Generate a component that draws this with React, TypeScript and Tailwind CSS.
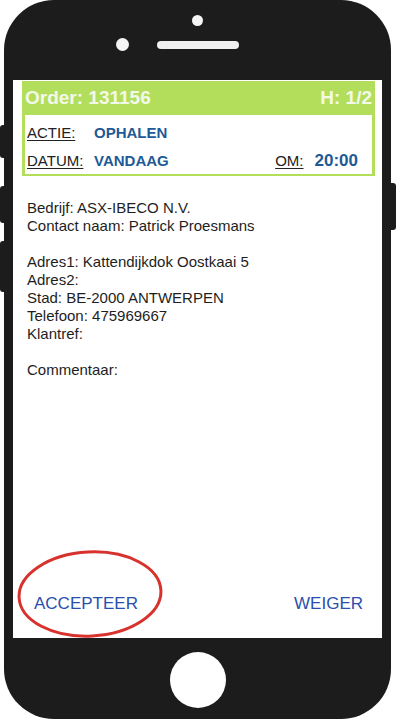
import React from 'react';

const font = { fontFamily: '"Liberation Sans", Arial, sans-serif' };

const details = [
  'Bedrijf: ASX-IBECO N.V.',
  'Contact naam: Patrick Proesmans',
  '',
  'Adres1: Kattendijkdok Oostkaai 5',
  'Adres2:',
  'Stad: BE-2000 ANTWERPEN',
  'Telefoon: 475969667',
  'Klantref:',
  '',
  'Commentaar:',
];

const App = () => {
  return (
    <div className="w-[397px] h-[720px] bg-white overflow-hidden" style={font}>
      {/* PHONE BODY */}
      <div className="relative ml-[4px] w-[387px] h-[719px] rounded-[50px] bg-[#1c1c1c] flex flex-col items-center">
        {/* side buttons */}
        <div className="absolute left-[-4px] top-[125px] w-[6px] h-[33px] rounded-l-[3px] bg-[#1c1c1c]" />
        <div className="absolute left-[-4px] top-[186px] w-[6px] h-[37px] rounded-l-[3px] bg-[#1c1c1c]" />
        <div className="absolute left-[-4px] top-[241px] w-[6px] h-[51px] rounded-l-[3px] bg-[#1c1c1c]" />
        <div className="absolute right-[-5px] top-[183px] w-[7px] h-[47px] rounded-r-[3px] bg-[#1c1c1c]" />

        {/* TOP BEZEL */}
        <div className="w-full h-[80px] flex flex-col items-center">
          <div className="mt-[15px] w-[11px] h-[11px] rounded-full bg-[#f4f4f4]" />
          <div className="self-start ml-[112px] mt-[12px] flex items-center">
            <div className="w-[13px] h-[13px] rounded-full bg-[#f4f4f4]" />
            <div className="ml-[28px] w-[82px] h-[8px] rounded-full bg-[#f0f0f0]" />
          </div>
        </div>

        {/* SCREEN */}
        <div className="relative w-[369px] h-[558px] bg-white flex flex-col">
          <div className="pl-[9px] pr-[7px] pt-[1px]">
            <div className="bg-[#b3de5c] px-[3px] pb-[2px]">
              <div className="h-[34px] flex items-center justify-between pr-[0px] pl-[0px] text-[19px] font-bold text-[#f3f9e8]">
                <span>Order: 131156</span>
                <span>H: 1/2</span>
              </div>
              <div className="bg-white pt-[6px] pb-[1px] pl-[2px] flex flex-col gap-[4px] text-[15px]">
                <div className="h-[24px] flex items-center">
                  <span className="w-[67px] text-[#222] underline underline-offset-2">ACTIE:</span>
                  <span className="font-bold text-[#1e5a96]">OPHALEN</span>
                </div>
                <div className="h-[24px] flex items-center">
                  <span className="w-[67px] text-[#222] underline underline-offset-2">DATUM:</span>
                  <span className="flex-1 font-bold text-[#1e5a96]">VANDAAG</span>
                  <span className="text-[#222] underline underline-offset-2">OM:</span>
                  <span className="ml-[11px] mr-[14px] text-[17px] font-bold text-[#1e5a96]">20:00</span>
                </div>
              </div>
            </div>
          </div>

          <div className="mt-[23px] px-[14px] text-[15px] leading-[18px] text-[#1e1e1e]">
            {details.map((line, i) => (
              <div key={i} className="h-[18px]">{line}</div>
            ))}
          </div>

          {/* ACTIONS */}
          <div className="mt-auto mb-[12px] h-[44px] pl-[21px] pr-[19px] flex items-center justify-between text-[17px] text-[#2a4fae]">
            <span>ACCEPTEER</span>
            <span>WEIGER</span>
          </div>

          {/* red marker ellipse */}
          <svg
            className="absolute left-[4px] top-[470px]"
            width="146"
            height="88"
            viewBox="0 0 146 88"
          >
            <ellipse
              cx="73"
              cy="44"
              rx="71"
              ry="42"
              fill="none"
              stroke="#d8322e"
              strokeWidth="3"
              transform="rotate(-3 73 44)"
            />
          </svg>
        </div>

        {/* HOME BUTTON */}
        <div className="mt-[14px] w-[56px] h-[56px] rounded-full bg-white" />
      </div>
    </div>
  );
};

export default App;
